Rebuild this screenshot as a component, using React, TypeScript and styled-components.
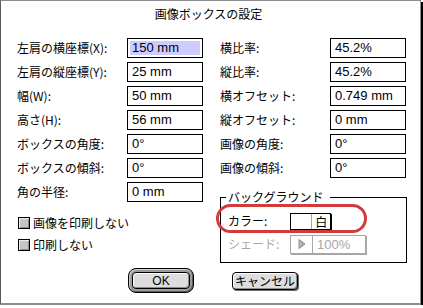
import React from "react";
import styled, { createGlobalStyle, css } from "styled-components";

const GlobalStyle = createGlobalStyle`
  html, body {
    margin: 0;
    padding: 0;
    background: #fff;
  }
  body {
    font-family: "Noto Sans CJK JP", sans-serif;
    font-size: 12px;
    color: #000;
  }
`;

const latin = `"Liberation Sans", "Noto Sans CJK JP", sans-serif`;

const Window = styled.div`
  width: 421px;
  height: 305px;
  box-sizing: border-box;
  background: #fff;
  border-top: 1px solid #8c8c8c;
  border-left: 1px solid #5a5a5a;
  border-right: 1px solid #8c8c8c;
  border-bottom: 2px solid #8c8c8c;
  box-shadow: 2px 2px 0 #000;
`;

const Title = styled.div`
  height: 37px;
  box-sizing: border-box;
  padding: 5px 4px 0 0;
  line-height: 16px;
  text-align: center;
`;

const Columns = styled.div`
  display: flex;
  align-items: flex-start;
  gap: 17px;
  padding-left: 16px;
`;

const Column = styled.div<{ $width: number }>`
  display: flex;
  flex-direction: column;
  width: ${(p) => p.$width}px;
`;

const FieldRow = styled.div`
  display: grid;
  grid-template-columns: 110px 76px;
  align-items: center;
  height: 20px;

  & + & {
    margin-top: 4px;
  }
`;

const Label = styled.span<{ $disabled?: boolean }>`
  white-space: nowrap;
  line-height: 16px;
  color: ${(p) => (p.$disabled ? "#a6a6a6" : "#000")};
`;

const Field = styled.div`
  box-sizing: border-box;
  height: 20px;
  border: 1px solid #000;
  padding: 0 2px;
  display: flex;
  align-items: center;
  background: #fff;
`;

const Value = styled.span<{ $selected?: boolean }>`
  flex: 1;
  height: 14px;
  padding-left: 2px;
  font-family: ${latin};
  font-size: 13px;
  line-height: 14px;
  white-space: nowrap;
  background: ${(p) => (p.$selected ? "#ccccff" : "transparent")};
`;

const CheckList = styled.div`
  display: flex;
  flex-direction: column;
  gap: 6px;
  margin-top: 13px;
  padding-left: 1px;
`;

const CheckRow = styled.label`
  display: flex;
  align-items: center;
  gap: 3px;
  height: 16px;
  line-height: 16px;
`;

const CheckBox = styled.span`
  width: 12px;
  height: 12px;
  box-sizing: border-box;
  border: 1px solid #000;
  background: #c6c6c6;
  box-shadow: inset 1px 1px 0 #efefef, inset -1px -1px 0 #8a8a8a;
`;

const Group = styled.fieldset`
  margin: 11px 0 0 0;
  padding: 7px 8px 8px 5px;
  border: 1px solid #000;
  min-width: 0;
  box-sizing: border-box;
  width: 187px;
`;

const Legend = styled.legend`
  padding: 0 6px 0 2px;
  line-height: 16px;
  font-size: 12px;
`;

const GroupRow = styled.div<{ $annotated?: boolean }>`
  position: relative;
  display: grid;
  grid-template-columns: 62px auto;
  align-items: center;
  justify-items: start;
  padding-left: 2px;
  height: ${(p) => (p.$annotated ? 18 : 20)}px;

  & + & {
    margin-top: 4px;
  }

  ${(p) =>
    p.$annotated &&
    css`
      &::after {
        content: "";
        position: absolute;
        left: -10px;
        top: -8px;
        width: 151px;
        height: 29px;
        box-sizing: border-box;
        border: 3px solid #d33a3a;
        border-radius: 15px;
        pointer-events: none;
      }
    `}
`;

const Popup = styled.div<{ $disabled?: boolean; $width: number }>`
  display: flex;
  box-sizing: border-box;
  width: ${(p) => p.$width}px;
  height: ${(p) => (p.$disabled ? 19 : 17)}px;
  border: 1px solid ${(p) => (p.$disabled ? "#a6a6a6" : "#000")};
  box-shadow: 1px 1px 0 ${(p) => (p.$disabled ? "#a6a6a6" : "#000")};
  background: #fff;
  color: ${(p) => (p.$disabled ? "#a6a6a6" : "#000")};
`;

const PopupCell = styled.span<{ $width?: number; $disabled?: boolean }>`
  display: flex;
  align-items: center;
  justify-content: ${(p) => (p.$width ? "center" : "flex-start")};
  box-sizing: border-box;
  ${(p) => (p.$width ? `width: ${p.$width}px;` : "flex: 1; padding-left: 4px;")}
  line-height: 15px;

  & + & {
    border-left: 1px solid ${(p) => (p.$disabled ? "#a6a6a6" : "#000")};
  }
`;

const Percent = styled.span`
  font-family: ${latin};
  font-size: 13px;
`;

const Footer = styled.div`
  display: flex;
  align-items: center;
  gap: 38px;
  margin-top: 5px;
  padding-left: 127px;
`;

const DefaultRing = styled.div`
  box-sizing: border-box;
  width: 66px;
  height: 25px;
  padding: 3px;
  border: 1px solid #000;
  border-radius: 8px;
  background: #9c9c9c;
  box-shadow: inset 1px 1px 0 #d0d0d0, inset -1px -1px 0 #5c5c5c;
  display: flex;
`;

const Button = styled.button<{ $latin?: boolean }>`
  box-sizing: border-box;
  margin: 0;
  padding: 0 2px;
  border: 1px solid #000;
  border-radius: 4px;
  background: #dddddd;
  box-shadow: inset 1px 1px 0 #fff, inset -1px -1px 0 #8c8c8c;
  color: #000;
  font-family: ${(p) => (p.$latin ? latin : `"Noto Sans CJK JP", sans-serif`)};
  font-size: 12px;
  line-height: 16px;
  white-space: nowrap;
`;

const OkButton = styled(Button)`
  flex: 1;
  height: 17px;
`;

const CancelButton = styled(Button)`
  width: 66px;
  height: 18px;
  margin-top: 1px;
  box-shadow: inset 1px 1px 0 #fff, inset -1px -1px 0 #8c8c8c, 1px 1px 0 #6a6a6a;
`;

const leftFields = [
  { label: "左肩の横座標(X):", value: "150 mm", selected: true },
  { label: "左肩の縦座標(Y):", value: "25 mm" },
  { label: "幅(W):", value: "50 mm" },
  { label: "高さ(H):", value: "56 mm" },
  { label: "ボックスの角度:", value: "0°" },
  { label: "ボックスの傾斜:", value: "0°" },
  { label: "角の半径:", value: "0 mm" },
];

const rightFields = [
  { label: "横比率:", value: "45.2%" },
  { label: "縦比率:", value: "45.2%" },
  { label: "横オフセット:", value: "0.749 mm" },
  { label: "縦オフセット:", value: "0 mm" },
  { label: "画像の角度:", value: "0°" },
  { label: "画像の傾斜:", value: "0°" },
];

type FieldDef = { label: string; value: string; selected?: boolean };

const Fields: React.FC<{ items: FieldDef[] }> = ({ items }) => (
  <>
    {items.map((f) => (
      <FieldRow key={f.label}>
        <Label>{f.label}</Label>
        <Field>
          <Value $selected={f.selected}>{f.value}</Value>
        </Field>
      </FieldRow>
    ))}
  </>
);

const ArrowIcon = () => (
  <svg width="8" height="10" viewBox="0 0 8 10">
    <path d="M1 0.5 L7 5 L1 9.5 Z" fill="#c8c8c8" stroke="#8a8a8a" strokeWidth="1" />
    <path d="M2.5 3 L5 5 L2.5 7" fill="none" stroke="#8a8a8a" strokeWidth="1" />
  </svg>
);

const App: React.FC = () => {
  return (
    <>
      <GlobalStyle />
      <Window>
        <Title>画像ボックスの設定</Title>
        <Columns>
          <Column $width={186}>
            <Fields items={leftFields} />
            <CheckList>
              <CheckRow>
                <CheckBox />
                画像を印刷しない
              </CheckRow>
              <CheckRow>
                <CheckBox />
                印刷しない
              </CheckRow>
            </CheckList>
          </Column>
          <Column $width={187}>
            <Fields items={rightFields} />
            <Group>
              <Legend>バックグラウンド</Legend>
              <GroupRow $annotated>
                <Label>カラー:</Label>
                <Popup $width={41}>
                  <PopupCell $width={21} />
                  <PopupCell $width={19}>白</PopupCell>
                </Popup>
              </GroupRow>
              <GroupRow>
                <Label $disabled>シェード:</Label>
                <Popup $width={76} $disabled>
                  <PopupCell $width={21} $disabled>
                    <ArrowIcon />
                  </PopupCell>
                  <PopupCell $disabled>
                    <Percent>100%</Percent>
                  </PopupCell>
                </Popup>
              </GroupRow>
            </Group>
          </Column>
        </Columns>
        <Footer>
          <DefaultRing>
            <OkButton $latin>OK</OkButton>
          </DefaultRing>
          <CancelButton>キャンセル</CancelButton>
        </Footer>
      </Window>
    </>
  );
};

export default App;
